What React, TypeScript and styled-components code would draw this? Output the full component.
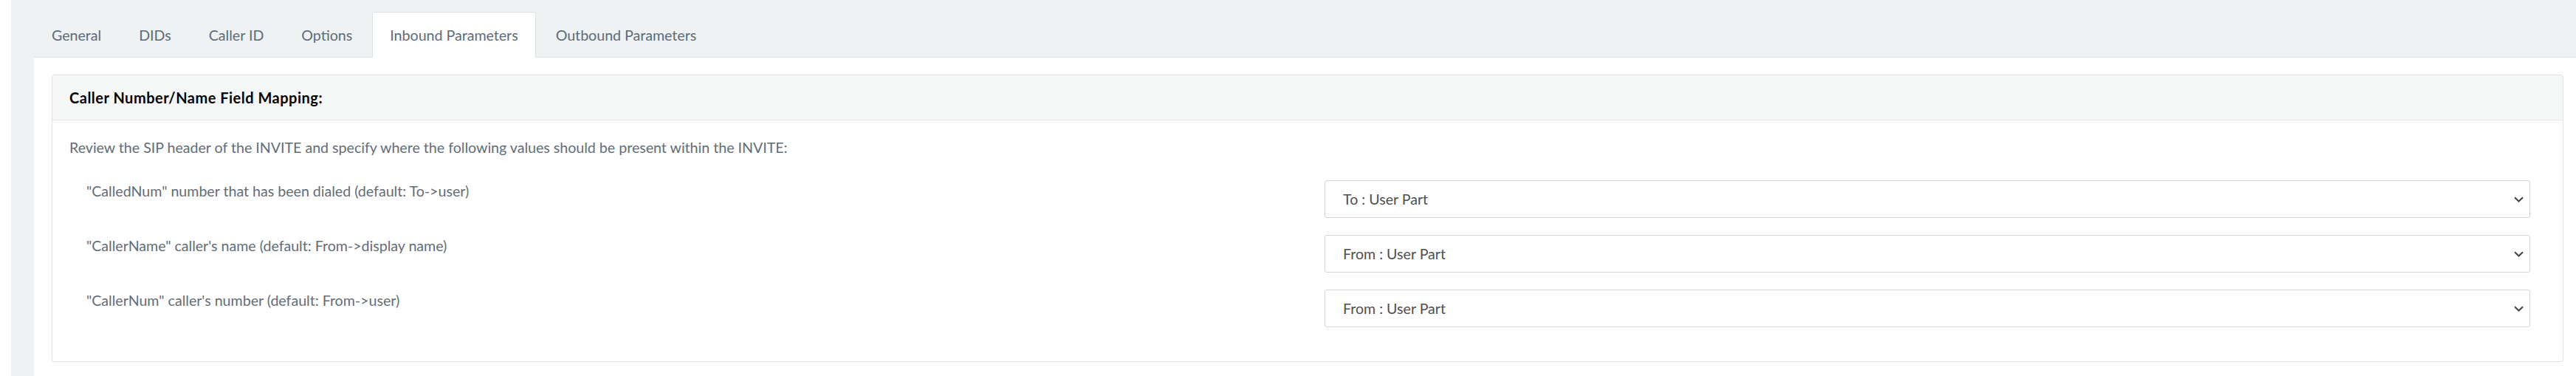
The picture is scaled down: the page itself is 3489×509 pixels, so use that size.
import React from "react";
import styled, { createGlobalStyle } from "styled-components";

const TABS = [
  { id: "general", label: "General" },
  { id: "dids", label: "DIDs" },
  { id: "callerid", label: "Caller ID" },
  { id: "options", label: "Options" },
  { id: "inbound", label: "Inbound Parameters" },
  { id: "outbound", label: "Outbound Parameters" },
];

const FIELDS = [
  {
    id: "calledNum",
    label: "\"CalledNum\" number that has been dialed (default: To->user)",
    value: "To : User Part",
  },
  {
    id: "callerName",
    label: "\"CallerName\" caller's name (default: From->display name)",
    value: "From : User Part",
  },
  {
    id: "callerNum",
    label: "\"CallerNum\" caller's number (default: From->user)",
    value: "From : User Part",
  },
];

const OPTIONS = [
  "To : User Part",
  "To : Display Name",
  "From : User Part",
  "From : Display Name",
];

function Chevron() {
  return (
    <svg width="13" height="8" viewBox="0 0 13 8" fill="none">
      <path d="M1 1.2l5.5 5.3 5.5-5.3" stroke="#444" strokeWidth="2" />
    </svg>
  );
}

function App() {
  const active = "inbound";

  return (
    <>
      <GlobalStyle />
      <Page>
        <Shell>
          <TabBar>
            {TABS.map((tab) => (
              <Tab key={tab.id} $active={tab.id === active}>
                {tab.label}
              </Tab>
            ))}
          </TabBar>
          <Panel>
            <Card>
              <CardHeader>Caller Number/Name Field Mapping:</CardHeader>
              <CardBody>
                <Intro>
                  Review the SIP header of the INVITE and specify where the
                  following values should be present within the INVITE:
                </Intro>
                <Fields>
                  {FIELDS.map((field) => (
                    <FieldRow key={field.id}>
                      <Label htmlFor={field.id}>{field.label}</Label>
                      <SelectCol>
                        <SelectBox>
                          <Select id={field.id} defaultValue={field.value}>
                            {OPTIONS.map((opt) => (
                              <option key={opt}>{opt}</option>
                            ))}
                          </Select>
                          <Chevron />
                        </SelectBox>
                      </SelectCol>
                    </FieldRow>
                  ))}
                </Fields>
              </CardBody>
            </Card>
          </Panel>
        </Shell>
      </Page>
    </>
  );
}

export default App;

const GlobalStyle = createGlobalStyle`
  html, body {
    margin: 0;
    padding: 0;
    background: #fff;
  }
  body {
    font-family: Lato, "Open Sans", sans-serif;
    font-size: 19.6px;
  }
  * {
    box-sizing: border-box;
  }
`;

const Page = styled.div`
  height: 509px;
  padding-left: 15px;
  overflow: hidden;
`;

const Shell = styled.div`
  height: 100%;
  background: #eef2f3;
  padding: 16px 0 0 31px;
  display: flex;
  flex-direction: column;
`;

const TabBar = styled.ul`
  display: flex;
  gap: 3px;
  list-style: none;
  margin: 0;
  padding: 0;
  border-bottom: 1px solid #dde1e3;
`;

const Tab = styled.li<{ $active?: boolean }>`
  height: 62px;
  margin-bottom: -1px;
  padding: 0 23px;
  display: flex;
  align-items: center;
  font-size: 19.6px;
  color: #5c6b79;
  border: 1px solid ${(p) => (p.$active ? "#dde1e3" : "transparent")};
  border-bottom-color: ${(p) => (p.$active ? "#fff" : "transparent")};
  border-radius: 3px 3px 0 0;
  background: ${(p) => (p.$active ? "#fff" : "transparent")};
  cursor: pointer;
`;

const Panel = styled.div`
  flex: 1;
  background: #fff;
  padding: 23px 17px 0 24px;
`;

const Card = styled.div`
  border: 1px solid #dfe3e3;
  border-radius: 3px;
`;

const CardHeader = styled.div`
  height: 61px;
  padding: 0 23px;
  display: flex;
  align-items: center;
  background: #f5f7f7;
  border-bottom: 1px solid #e6eaea;
  font-size: 20px;
  font-weight: 700;
  letter-spacing: 0.5px;
  color: #000;
`;

const CardBody = styled.div`
  padding: 22px 23px 46px;
`;

const Intro = styled.p`
  margin: 0 0 29px;
  line-height: 30px;
  color: #636d77;
`;

const Fields = styled.div`
  display: flex;
  flex-direction: column;
  gap: 23px;
`;

const FieldRow = styled.div`
  display: grid;
  grid-template-columns: 1fr 1fr;
`;

const Label = styled.label`
  padding: 0 23px;
  line-height: 30px;
  color: #636d77;
`;

const SelectCol = styled.div`
  padding: 0 21px 0 23px;
`;

const SelectBox = styled.div`
  height: 51px;
  display: flex;
  align-items: center;
  padding-right: 8px;
  border: 1px solid #cfd7da;
  border-radius: 3px;
  background: #fff;
`;

const Select = styled.select`
  flex: 1;
  height: 100%;
  padding: 0 0 0 24px;
  border: none;
  outline: none;
  background: transparent;
  appearance: none;
  font-family: inherit;
  font-size: 19.6px;
  color: #4f4f4f;
`;
